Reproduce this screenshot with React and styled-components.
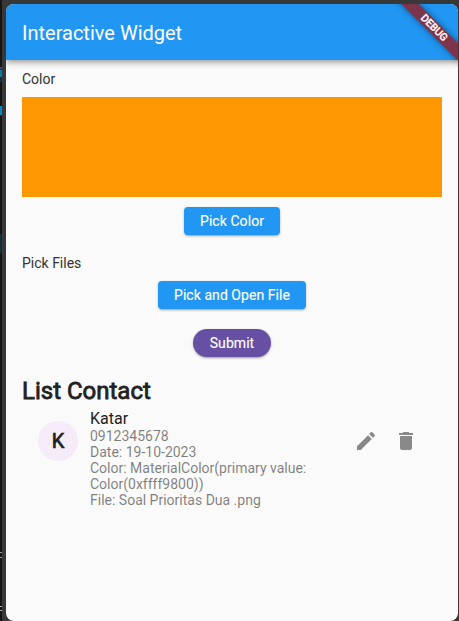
import React from "react";
import styled, { createGlobalStyle } from "styled-components";

const GlobalStyle = createGlobalStyle`
  * { box-sizing: border-box; }
  html, body { margin: 0; height: 100%; overflow: hidden; background: #383838; }
  body { font-family: Roboto, sans-serif; color: #212121; }
`;

const Desktop = styled.div`
  display: flex;
  width: 459px;
  height: 621px;
  overflow: hidden;
  background: #383838;
`;

const EditorEdge = styled.div`
  position: relative;
  width: 2px;
  flex: none;
  background: #151515;
`;

const CodeMark = styled.span`
  position: absolute;
  left: 0;
  width: 2px;
  top: ${(p) => p.$top}px;
  height: ${(p) => p.$height}px;
  background: ${(p) => p.$color};
`;

const Screen = styled.main`
  position: relative;
  display: flex;
  flex-direction: column;
  width: 452px;
  height: 617px;
  margin: 4px 0 0 4px;
  border-radius: 8px;
  overflow: hidden;
  background: #fafafa;
`;

const AppBar = styled.header`
  display: flex;
  align-items: center;
  flex: none;
  height: 56px;
  padding: 2px 16px 0;
  background: #2196f3;
  color: #fff;
  font-size: 20px;
  box-shadow: 0 2px 4px -1px rgba(0, 0, 0, 0.2), 0 4px 5px rgba(0, 0, 0, 0.14),
    0 1px 10px rgba(0, 0, 0, 0.12);
`;

const DebugBanner = styled.div`
  position: absolute;
  top: 18px;
  right: -26px;
  width: 100px;
  height: 12px;
  transform: rotate(45deg);
  background: #7d344b;
  box-shadow: 0 0 6px rgba(0, 0, 0, 0.5);
  color: #f8f0f3;
  font-size: 10.2px;
  font-weight: 400;
  line-height: 12px;
  letter-spacing: 0.1px;
  text-align: center;
  -webkit-text-stroke: 0.6px currentColor;
`;

const Content = styled.div`
  display: flex;
  flex-direction: column;
  padding: 11px 16px 0;
`;

const Label = styled.div`
  height: 16px;
  margin-bottom: 10px;
  color: #333;
  font-size: 14px;
  line-height: 16px;
`;

const Swatch = styled.div`
  height: 100px;
  margin-bottom: 10px;
  background: #ff9800;
`;

const Button = styled.button`
  align-self: center;
  height: 28px;
  margin: 0 0 20px;
  padding: 0 ${(p) => (p.$pill ? 16.5 : 16)}px;
  border: 0;
  border-radius: ${(p) => (p.$pill ? 14 : 4)}px;
  background: ${(p) => (p.$pill ? "#6750a4" : "#2196f3")};
  color: #fff;
  font: 400 14px/28px Roboto, sans-serif;
  letter-spacing: 0.06px;
  -webkit-text-stroke: 0.12px currentColor;
  white-space: nowrap;
  box-shadow: 0 2px 2px -1px rgba(0, 0, 0, 0.22), 0 1px 3px rgba(0, 0, 0, 0.2);
`;

const Heading = styled.h1`
  height: 28px;
  margin: 0;
  font-size: 24px;
  font-weight: 400;
  line-height: 28px;
  -webkit-text-stroke: 0.8px currentColor;
`;

const ContactRow = styled.section`
  display: flex;
  margin-top: 5px;
  padding-left: 16px;
`;

const Avatar = styled.div`
  width: 40px;
  height: 40px;
  margin: 11px 12px 0 0;
  flex: none;
  border-radius: 50%;
  background: #f6ebf8;
  font-size: 20px;
  font-weight: 400;
  line-height: 41px;
  text-align: center;
  -webkit-text-stroke: 0.7px currentColor;
`;

const Details = styled.div`
  width: 251px;
  flex: none;
`;

const Name = styled.div`
  font-size: 16px;
  line-height: 18px;
`;

const Detail = styled.div`
  color: rgba(0, 0, 0, 0.5);
  font-size: 14px;
  line-height: 16px;
`;

const Actions = styled.div`
  display: flex;
  gap: 16px;
  padding: 19px 0 0 13px;
`;

const Icon = styled.svg`
  display: block;
  width: 24px;
  height: 24px;
  fill: #898989;
`;

const marks = [
  [67, 2, "#2353a0"],
  [70, 7, "#087da0"],
  [78, 4, "#13333c"],
  [106, 9, "#008ac0"],
  [234, 19, "#132f38"],
  [552, 1, "#9292a0"],
  [557, 1, "#9292a0"],
  [606, 1, "#b0b0b0"],
  [610, 1, "#b0b0b0"],
];

export default function App() {
  return (
    <Desktop>
      <GlobalStyle />
      <EditorEdge>
        {marks.map(([top, height, color]) => (
          <CodeMark key={top} $top={top} $height={height} $color={color} />
        ))}
      </EditorEdge>
      <Screen>
        <AppBar>Interactive Widget</AppBar>
        <DebugBanner>DEBUG</DebugBanner>
        <Content>
          <Label>Color</Label>
          <Swatch />
          <Button>Pick Color</Button>
          <Label>Pick Files</Label>
          <Button>Pick and Open File</Button>
          <Button $pill>Submit</Button>
          <Heading>List Contact</Heading>
          <ContactRow>
            <Avatar>K</Avatar>
            <Details>
              <Name>Katar</Name>
              <Detail>0912345678</Detail>
              <Detail>Date: 19-10-2023</Detail>
              <Detail>Color: MaterialColor(primary value: Color(0xffff9800))</Detail>
              <Detail>File: Soal Prioritas Dua .png</Detail>
            </Details>
            <Actions>
              <Icon viewBox="0 0 24 24">
                <path d="M3 17.25V21h3.75L17.81 9.94l-3.75-3.75L3 17.25zM20.71 7.04a1 1 0 0 0 0-1.41l-2.34-2.34a1 1 0 0 0-1.41 0l-1.83 1.83 3.75 3.75 1.83-1.83z" />
              </Icon>
              <Icon viewBox="0 0 24 24">
                <path d="M6 19c0 1.1.9 2 2 2h8c1.1 0 2-.9 2-2V7H6v12zM19 4h-3.5l-1-1h-5l-1 1H5v2h14V4z" />
              </Icon>
            </Actions>
          </ContactRow>
        </Content>
      </Screen>
    </Desktop>
  );
}
